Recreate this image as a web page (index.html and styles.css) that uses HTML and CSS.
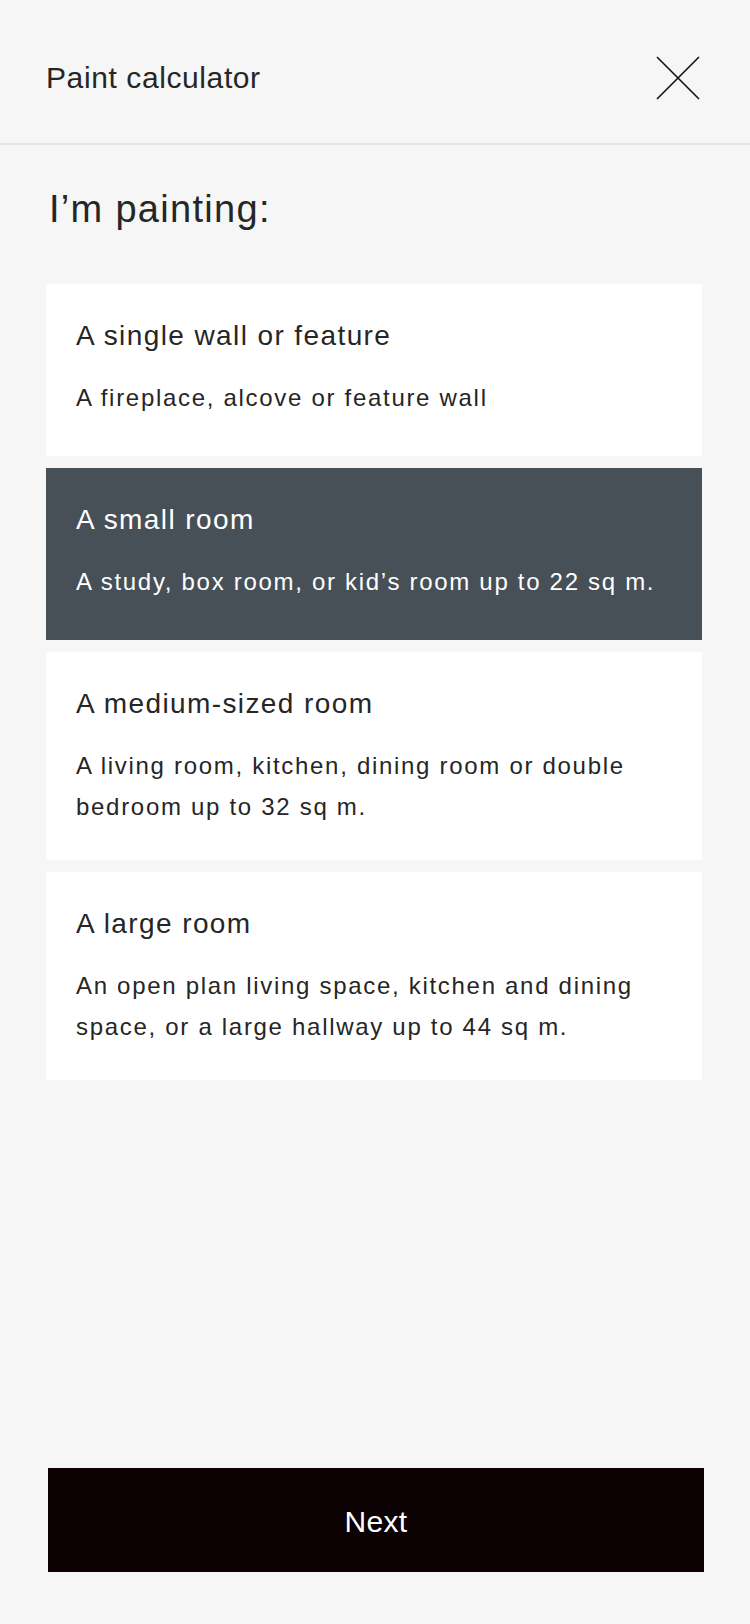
FILE: index.html
```html
<!DOCTYPE html>
<html lang="en">
<head>
<meta charset="utf-8">
<title>Paint calculator</title>
<link rel="stylesheet" href="styles.css">
</head>
<body>
<div class="page">
  <header class="topbar">
    <h1 class="topbar-title">Paint calculator</h1>
    <button class="close-btn" aria-label="Close">
      <svg width="44" height="44" viewBox="0 0 44 44"><path d="M1 1 L43 43 M43 1 L1 43" stroke="#111" stroke-width="1.6" fill="none"/></svg>
    </button>
  </header>
  <main class="content">
    <h2 class="question">I’m painting:</h2>
    <div class="options">
      <div class="option">
        <div class="option-title">A single wall or feature</div>
        <div class="option-desc">A fireplace, alcove or feature wall</div>
      </div>
      <div class="option option-selected">
        <div class="option-title">A small room</div>
        <div class="option-desc">A study, box room, or kid’s room up to 22 sq m.</div>
      </div>
      <div class="option">
        <div class="option-title">A medium-sized room</div>
        <div class="option-desc">A living room, kitchen, dining room or double bedroom up to 32 sq m.</div>
      </div>
      <div class="option">
        <div class="option-title">A large room</div>
        <div class="option-desc">An open plan living space, kitchen and dining space, or a large hallway up to 44 sq m.</div>
      </div>
    </div>
    <div class="spacer"></div>
    <button class="next-btn">Next</button>
  </main>
</div>
</body>
</html>
```
FILE: styles.css
```css
* { box-sizing: border-box; }
html, body { margin: 0; padding: 0; }
body {
  background: #f6f6f6;
  font-family: "Liberation Sans", Arial, Helvetica, sans-serif;
  color: #262626;
}
.page {
  width: 750px;
  height: 1624px;
  display: flex;
  flex-direction: column;
}
.topbar {
  height: 145px;
  padding: 12px 50px 0 46px;
  border-bottom: 2px solid #e3e3e3;
  display: flex;
  align-items: center;
  justify-content: space-between;
}
.topbar-title {
  margin: 0;
  font-size: 30px;
  font-weight: normal;
  line-height: 36px;
  letter-spacing: 0.6px;
}
.close-btn {
  border: 0;
  background: none;
  padding: 0;
  width: 44px;
  height: 44px;
  display: flex;
}
.content {
  flex: 1;
  display: flex;
  flex-direction: column;
  padding: 0 48px 52px 46px;
}
.question {
  margin: 41px 0 52px 3px;
  font-size: 38px;
  font-weight: normal;
  line-height: 46px;
  letter-spacing: 1.3px;
}
.options {
  display: flex;
  flex-direction: column;
  gap: 12px;
}
.option {
  background: #ffffff;
  min-height: 172px;
  padding: 34px 30px 32px 30px;
}
.option-selected {
  background: #474f57;
  color: #ffffff;
}
.option-title {
  font-size: 28px;
  line-height: 36px;
  letter-spacing: 1.4px;
}
.option-desc {
  margin-top: 23px;
  font-size: 24px;
  line-height: 41.4px;
  letter-spacing: 1.7px;
}
.spacer { flex: 1; }
.next-btn {
  margin-left: 2px;
  margin-right: -2px;
  height: 104px;
  border: 0;
  background: #0c0203;
  color: #ffffff;
  font-family: inherit;
  font-size: 30px;
  letter-spacing: 0.3px;
  padding: 3px 0 0 0;
}
```
